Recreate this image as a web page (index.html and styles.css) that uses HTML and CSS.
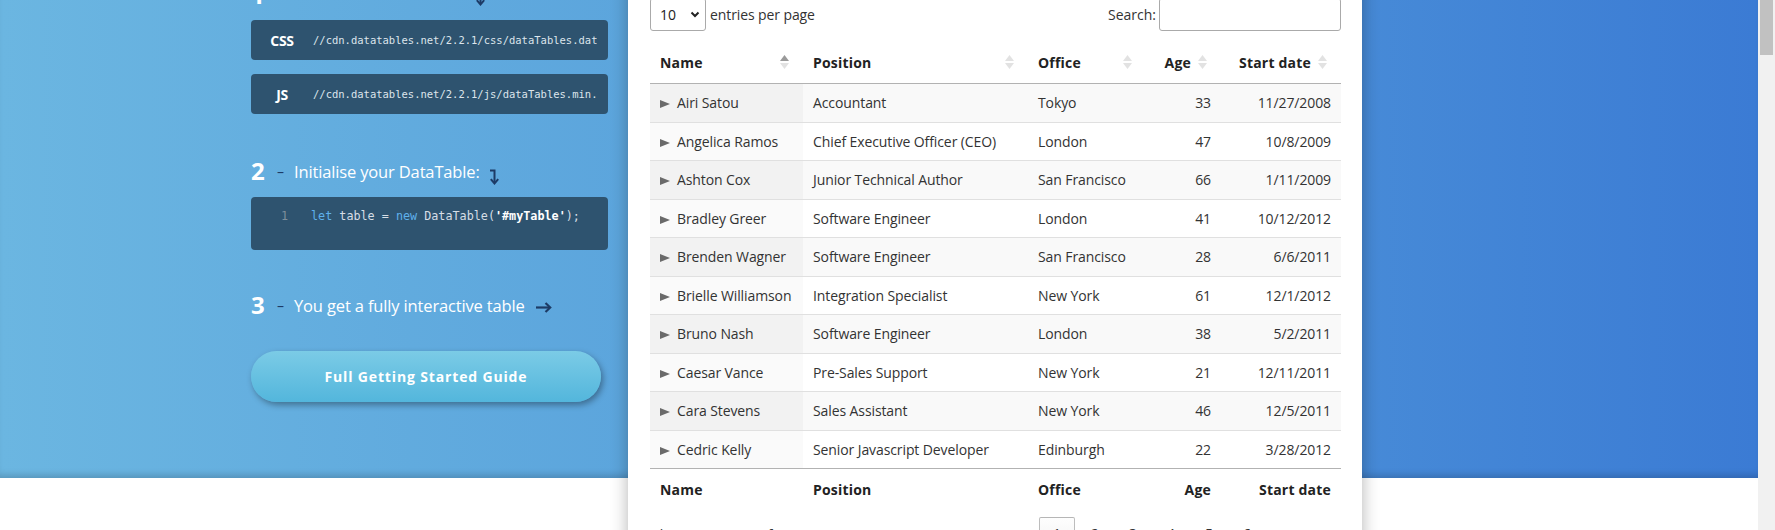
FILE: index.html
```html
<!DOCTYPE html>
<html lang="en">
<head>
<meta charset="utf-8">
<title>DataTables</title>
<link rel="stylesheet" href="styles.css">
</head>
<body>
<div class="page">
  <div class="viewport">
    <section class="hero">
      <div class="intro">
        <h3 class="step step-first">
          <span class="step-num">1</span><span class="step-dash">–</span><span class="step-text">Include these two files:</span>
          <svg class="arrow-down" width="10" height="16" viewBox="0 0 10 16"><path d="M1 1.5H5.5V14" fill="none" stroke="#1d3b66" stroke-width="2"/><path d="M1.8 10.2L5.5 14.5L9.2 10.2" fill="none" stroke="#1d3b66" stroke-width="2"/></svg>
        </h3>
        <div class="file"><span class="file-type">CSS</span><span class="file-url">//cdn.datatables.net/2.2.1/css/dataTables.dataTables.min.css</span></div>
        <div class="file"><span class="file-type">JS</span><span class="file-url">//cdn.datatables.net/2.2.1/js/dataTables.min.js</span></div>

        <h3 class="step step-gap">
          <span class="step-num">2</span><span class="step-dash">–</span><span class="step-text">Initialise your DataTable:</span>
          <svg class="arrow-down" width="10" height="16" viewBox="0 0 10 16"><path d="M1 1.5H5.5V14" fill="none" stroke="#1d3b66" stroke-width="2"/><path d="M1.8 10.2L5.5 14.5L9.2 10.2" fill="none" stroke="#1d3b66" stroke-width="2"/></svg>
        </h3>
        <div class="code"><span class="code-ln">1</span><code class="code-line"><span class="kw">let</span> table = <span class="kw">new</span> DataTable(<span class="str">'#myTable'</span>);</code></div>

        <h3 class="step step-gap3">
          <span class="step-num">3</span><span class="step-dash">–</span><span class="step-text">You get a fully interactive table</span>
          <svg class="arrow-right" width="17" height="12" viewBox="0 0 17 12"><path d="M1 6.5H15" fill="none" stroke="#1d3b66" stroke-width="2.2"/><path d="M10.5 2L15.2 6.5L10.5 11" fill="none" stroke="#1d3b66" stroke-width="2.2"/></svg>
        </h3>
        <a class="guide-btn" href="#">Full Getting Started Guide</a>
      </div>

      <div class="card">
        <div class="dt-top">
          <div class="dt-length">
            <span class="select-box"><span>10</span><svg width="10" height="7" viewBox="0 0 10 7"><path d="M1.5 1.5L5 5L8.5 1.5" fill="none" stroke="#222" stroke-width="2"/></svg></span>
            <span class="length-label">entries per page</span>
          </div>
          <div class="dt-search">
            <label class="search-label">Search:</label><input class="search-input" type="search">
          </div>
        </div>

        <table class="dt">
          <colgroup>
            <col class="c-name"><col class="c-pos"><col class="c-off"><col class="c-age"><col class="c-date">
          </colgroup>
          <thead>
            <tr>
              <th><div class="th-head"><span>Name</span><svg class="sort" width="17" height="18" viewBox="0 0 17 18"><path d="M4 8L8.5 2L13 8Z" fill="#9a9a9a"/><path d="M4 10L8.5 16L13 10Z" fill="#e2e2e2"/></svg></div></th>
              <th><div class="th-head"><span>Position</span><svg class="sort" width="17" height="18" viewBox="0 0 17 18"><path d="M4 8L8.5 2L13 8Z" fill="#e2e2e2"/><path d="M4 10L8.5 16L13 10Z" fill="#e2e2e2"/></svg></div></th>
              <th><div class="th-head"><span>Office</span><svg class="sort" width="17" height="18" viewBox="0 0 17 18"><path d="M4 8L8.5 2L13 8Z" fill="#e2e2e2"/><path d="M4 10L8.5 16L13 10Z" fill="#e2e2e2"/></svg></div></th>
              <th class="num"><div class="th-head th-right"><span>Age</span><svg class="sort" width="17" height="18" viewBox="0 0 17 18"><path d="M4 8L8.5 2L13 8Z" fill="#e2e2e2"/><path d="M4 10L8.5 16L13 10Z" fill="#e2e2e2"/></svg></div></th>
              <th class="num"><div class="th-head th-right"><span>Start date</span><svg class="sort" width="17" height="18" viewBox="0 0 17 18"><path d="M4 8L8.5 2L13 8Z" fill="#e2e2e2"/><path d="M4 10L8.5 16L13 10Z" fill="#e2e2e2"/></svg></div></th>
            </tr>
          </thead>
          <tbody>
            <tr><td class="ctl">Airi Satou</td><td>Accountant</td><td>Tokyo</td><td class="num">33</td><td class="num">11/27/2008</td></tr>
            <tr><td class="ctl">Angelica Ramos</td><td>Chief Executive Officer (CEO)</td><td>London</td><td class="num">47</td><td class="num">10/8/2009</td></tr>
            <tr><td class="ctl">Ashton Cox</td><td>Junior Technical Author</td><td>San Francisco</td><td class="num">66</td><td class="num">1/11/2009</td></tr>
            <tr><td class="ctl">Bradley Greer</td><td>Software Engineer</td><td>London</td><td class="num">41</td><td class="num">10/12/2012</td></tr>
            <tr><td class="ctl">Brenden Wagner</td><td>Software Engineer</td><td>San Francisco</td><td class="num">28</td><td class="num">6/6/2011</td></tr>
            <tr><td class="ctl">Brielle Williamson</td><td>Integration Specialist</td><td>New York</td><td class="num">61</td><td class="num">12/1/2012</td></tr>
            <tr><td class="ctl">Bruno Nash</td><td>Software Engineer</td><td>London</td><td class="num">38</td><td class="num">5/2/2011</td></tr>
            <tr><td class="ctl">Caesar Vance</td><td>Pre-Sales Support</td><td>New York</td><td class="num">21</td><td class="num">12/11/2011</td></tr>
            <tr><td class="ctl">Cara Stevens</td><td>Sales Assistant</td><td>New York</td><td class="num">46</td><td class="num">12/5/2011</td></tr>
            <tr><td class="ctl">Cedric Kelly</td><td>Senior Javascript Developer</td><td>Edinburgh</td><td class="num">22</td><td class="num">3/28/2012</td></tr>
          </tbody>
          <tfoot>
            <tr><th>Name</th><th>Position</th><th>Office</th><th class="num">Age</th><th class="num">Start date</th></tr>
          </tfoot>
        </table>

        <div class="dt-bottom">
          <div class="dt-info">Showing 1 to 10 of 57 entries</div>
          <nav class="dt-paging">
            <span class="pg disabled">«</span><span class="pg disabled">‹</span><span class="pg current">1</span><span class="pg">2</span><span class="pg">3</span><span class="pg">4</span><span class="pg">5</span><span class="pg">6</span><span class="pg">›</span><span class="pg">»</span>
          </nav>
        </div>
      </div>
    </section>
    <section class="below"></section>
  </div>
  <div class="scrollbar"><div class="scroll-thumb"></div></div>
</div>
</body>
</html>
```

FILE: styles.css
```css
html, body {
  margin: 0;
  padding: 0;
  background: #fff;
}
body {
  font-family: "Open Sans", "Noto Sans", sans-serif;
  font-size: 14px;
  color: #333;
  overflow: hidden;
}
.page {
  display: flex;
  width: 1775px;
  height: 530px;
  overflow: hidden;
}
.viewport {
  flex: 1;
  overflow: hidden;
  height: 530px;
}
.scrollbar {
  width: 17px;
  background: #f1f1f1;
  padding: 0 2px;
  box-sizing: border-box;
}
.scroll-thumb {
  height: 55px;
  background: #c1c1c1;
}

/* hero */
.hero {
  height: 478px;
  display: flex;
  align-items: flex-start;
  gap: 20px;
  padding-left: 251px;
  box-sizing: border-box;
  background: linear-gradient(to right, #6bb6e1 0%, #5aa3dc 40%, #3b7bd4 100%);
  box-shadow: inset 0 -7px 7px -4px rgba(0, 0, 0, 0.18);
}
.below {
  height: 200px;
  background: #fff;
}

.intro {
  width: 357px;
  margin-top: -24px;
  flex-shrink: 0;
}
.step {
  margin: 0 0 10px;
  height: 32px;
  display: flex;
  align-items: center;
  font-weight: 400;
  color: #fff;
}
.step-first { margin-bottom: 12px; }
.step-gap { margin-top: 41px; }
.step-gap3 { margin-top: 39px; }
.step-num {
  font-size: 24px;
  font-weight: 700;
  width: 15px;
  line-height: 32px;
}
.step-first .step-num { margin-top: 5px; }
.step-first .step-text { margin-top: -6px; }
.step-dash {
  color: #1d3b66;
  font-size: 14px;
  margin: 0 10px 0 11px;
}
.step-text {
  font-size: 16.5px;
  font-weight: 400;
  letter-spacing: -0.15px;
}
.arrow-down {
  margin-left: 9px;
  margin-top: 12px;
}
.arrow-right {
  margin-left: 10px;
  margin-top: 4px;
}

.file {
  height: 40px;
  display: flex;
  align-items: center;
  background: #2e536f;
  border-radius: 4px;
  margin-bottom: 14px;
  overflow: hidden;
  padding-right: 11px;
}
.file-type {
  width: 62px;
  flex-shrink: 0;
  text-align: center;
  font-weight: 700;
  font-size: 14px;
  color: #fff;
  letter-spacing: -0.3px;
}
.file-url {
  font-family: "DejaVu Sans Mono", "Liberation Mono", monospace;
  font-size: 10.5px;
  color: #dde5ec;
  white-space: nowrap;
  overflow: hidden;
}

.code {
  height: 53px;
  box-sizing: border-box;
  background: #2e536f;
  border-radius: 4px;
  display: flex;
  align-items: flex-start;
  padding-top: 10px;
  font-family: "DejaVu Sans Mono", "Liberation Mono", monospace;
  font-size: 11.75px;
  line-height: 18px;
}
.code-ln {
  width: 36px;
  padding-left: 30px;
  box-sizing: border-box;
  color: #7d8e9c;
  flex-shrink: 0;
}
.code-line {
  font-family: inherit;
  color: #d6dee6;
  margin-left: 24px;
  white-space: nowrap;
}
.kw { color: #5fb1ec; }
.str { color: #fff; font-weight: 700; }

.guide-btn {
  display: flex;
  align-items: center;
  justify-content: center;
  margin-top: 30px;
  width: 350px;
  height: 51px;
  border-radius: 26px;
  background: linear-gradient(to bottom, #7bcbe6, #53b6dc);
  box-shadow: 2px 3px 6px rgba(0, 0, 0, 0.35);
  color: #fff;
  font-weight: 700;
  font-size: 14px;
  letter-spacing: 0.85px;
  text-decoration: none;
}

/* card */
.card {
  position: relative;
  z-index: 1;
  width: 734px;
  flex-shrink: 0;
  box-sizing: border-box;
  margin-top: -40px;
  padding: 38px 21px 40px 22px;
  background: #fff;
  box-shadow: 0 0 16px rgba(0, 0, 0, 0.3);
}
.dt-top {
  height: 33px;
  display: flex;
  justify-content: space-between;
  align-items: center;
  margin-bottom: 10.5px;
}
.dt-length, .dt-search {
  display: flex;
  align-items: center;
}
.select-box {
  width: 56px;
  height: 33px;
  box-sizing: border-box;
  border: 1px solid #aaa;
  border-radius: 3px;
  display: flex;
  align-items: center;
  justify-content: space-between;
  padding: 0 5px 0 9px;
  color: #222;
}
.length-label { margin-left: 4px; letter-spacing: -0.1px; }
.search-label { margin-right: 3px; }
.search-input {
  width: 182px;
  height: 33px;
  box-sizing: border-box;
  border: 1px solid #aaa;
  border-radius: 3px;
  background: #fff;
  margin: 0;
  padding: 0 6px;
  font: inherit;
}

.dt {
  width: 691px;
  table-layout: fixed;
  border-collapse: collapse;
  border-spacing: 0;
}
.c-name { width: 153px; }
.c-pos { width: 225px; }
.c-off { width: 118px; }
.c-age { width: 75px; }
.c-date { width: 120px; }

.dt th {
  font-weight: 700;
  color: #222;
  text-align: left;
  line-height: 21.5px;
  letter-spacing: 0.2px;
}
.dt thead th {
  padding: 10px 10px;
  border-bottom: 1px solid rgba(0, 0, 0, 0.3);
}
.th-head {
  display: flex;
  align-items: center;
  justify-content: space-between;
}
.th-right {
  justify-content: flex-end;
  gap: 3px;
}
.sort { flex-shrink: 0; }
.dt td {
  padding: 8px 10px;
  line-height: 21.5px;
  white-space: nowrap;
  overflow: hidden;
  letter-spacing: -0.1px;
}
.dt tbody tr {
  border-bottom: 1px solid rgba(0, 0, 0, 0.12);
}
.dt tbody tr:last-child { border-bottom: 0; }
.dt tbody tr:nth-child(odd) td { background: #f9f9f9; }
.dt tbody tr:nth-child(odd) td.ctl { background: #f2f2f2; }
.dt tbody tr:nth-child(even) td.ctl { background: #fafafa; }
.dt .num { text-align: right; }
.ctl::before {
  content: "";
  display: inline-block;
  width: 0;
  height: 0;
  border-left: 10px solid #6a6a6a;
  border-top: 4.5px solid transparent;
  border-bottom: 4.5px solid transparent;
  margin-right: 7px;
  vertical-align: 0;
}
.dt tfoot th {
  padding: 10px 10px 6px;
  border-top: 1px solid rgba(0, 0, 0, 0.3);
}
.dt tfoot th.num { text-align: right; }

.dt-bottom {
  margin-top: 10.5px;
  display: flex;
  justify-content: space-between;
  align-items: flex-start;
}
.dt-info {
  padding-top: 8px;
  padding-left: 2px;
}
.dt-paging {
  display: flex;
}
.pg {
  display: block;
  min-width: 36px;
  box-sizing: border-box;
  text-align: center;
  padding: 6px 0 8px;
  margin-left: 2px;
  border: 1px solid transparent;
  border-radius: 2px;
  color: #333;
}
.pg.current {
  border-color: rgba(0, 0, 0, 0.25);
  background: linear-gradient(to bottom, rgba(230, 230, 230, 0.05), rgba(0, 0, 0, 0.05));
}
.pg.disabled { color: #aaa; }
```
